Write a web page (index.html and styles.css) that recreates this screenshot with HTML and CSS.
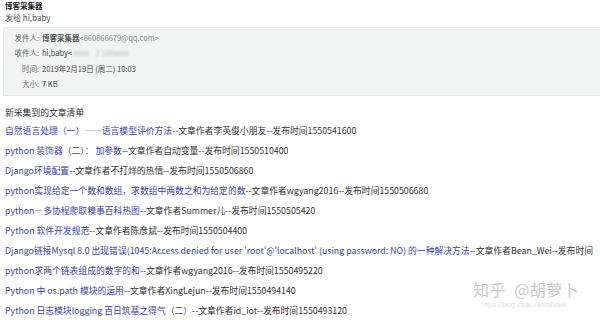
FILE: index.html
```html
<!DOCTYPE html>
<html lang="zh-CN">
<head>
<meta charset="utf-8">
<title>博客采集器</title>
<link rel="stylesheet" href="styles.css">
</head>
<body>
<div class="page">
  <div class="subject">博客采集器</div>
  <div class="to-line">发给 hi,baby</div>
  <div class="meta">
    <div class="row"><span class="label">发件人:</span><span class="value"><b class="sender">博客采集器</b><span class="addr">&lt;860866679@qq.com&gt;</span></span></div>
    <div class="row"><span class="label">收件人:</span><span class="value">hi,baby&lt; <span class="blurred">xxxx&nbsp;&nbsp;&nbsp;&nbsp;2 100xxxx</span></span></div>
    <div class="row"><span class="label">时间:</span><span class="value">2019年2月19日 (周二) 10:03</span></div>
    <div class="row"><span class="label">大小:</span><span class="value">7 KB</span></div>
  </div>
  <div class="content">
    <div class="heading">新采集到的文章清单</div>
    <div class="item"><a class="link">自然语言处理（一）——语言模型评价方法</a>--文章作者李英俊小朋友--发布时间1550541600</div>
    <div class="item"><a class="link">python 装饰器（二）： 加参数</a>--文章作者自动变量--发布时间1550510400</div>
    <div class="item"><a class="link">Django环境配置</a>--文章作者不打烊的热情--发布时间1550506860</div>
    <div class="item"><a class="link">python实现给定一个数和数组，求数组中两数之和为给定的数</a>--文章作者wgyang2016--发布时间1550506680</div>
    <div class="item"><a class="link">python—多协程爬取糗事百科热图</a>--文章作者Summer儿--发布时间1550505420</div>
    <div class="item"><a class="link">Python 软件开发规范</a>--文章作者陈彦斌--发布时间1550504400</div>
    <div class="item"><a class="link">Django链接Mysql 8.0 出现错误(1045:Access denied for user 'root'@'localhost' (using password: NO) 的一种解决方法</a>--文章作者Bean_Wei--发布时间</div>
    <div class="item"><a class="link">python求两个链表组成的数字的和</a>--文章作者wgyang2016--发布时间1550495220</div>
    <div class="item"><a class="link">Python 中 os.path 模块的运用</a>--文章作者XingLejun--发布时间1550494140</div>
    <div class="item"><a class="link">Python 日志模块logging 百日筑基之得气（二）</a>--文章作者id_iot--发布时间1550493120</div>
  </div>
</div>
<div class="watermark">
  <div class="wm-main">知乎&nbsp;&nbsp;@胡萝卜</div>
  <div class="wm-url">https://blog.csdn.net/hlhhell</div>
</div>
</body>
</html>
```
FILE: styles.css
```css
html, body {
  margin: 0;
  padding: 0;
  background: #ffffff;
  width: 600px;
  height: 320px;
  overflow: hidden;
  font-family: "Noto Sans CJK SC", "Noto Sans", sans-serif;
  color: #333333;
}

.page {
  position: relative;
  width: 600px;
  height: 320px;
  overflow: hidden;
}

.subject {
  padding-left: 5px;
  font-size: 7.5px;
  font-weight: bold;
  line-height: 12px;
  color: #222222;
}

.to-line {
  padding-left: 5px;
  font-size: 8px;
  line-height: 11px;
  color: #555555;
}

.meta {
  margin: 4px 0 0 3px;
  padding: 1.5px 0 3px 0;
  background: #f2f4f4;
  border-top: 1px solid #e8eaea;
  border-bottom: 1px solid #e3e5e5;
  border-left: 1px solid #e8eaea;
  font-size: 7.5px;
  color: #555555;
}

.row {
  display: flex;
  align-items: center;
  height: 15.5px;
  white-space: nowrap;
}

.label {
  width: 35px;
  text-align: right;
  color: #666666;
}

.value {
  padding-left: 3px;
  color: #444444;
}

.sender {
  font-weight: 600;
  color: #555555;
}

.addr {
  color: #888888;
}

.blurred {
  color: #b8b8b8;
  filter: blur(1.2px);
}

.content {
  padding-left: 5px;
  margin-top: 9.5px;
}

.heading {
  font-size: 8.8px;
  line-height: 16px;
  color: #333333;
}

.item {
  width: max-content;
  max-width: 595px;
  font-size: 8.8px;
  line-height: 20px;
  height: 20px;
  white-space: nowrap;
  overflow: hidden;
  color: #333333;
}

.link {
  color: #3a42aa;
  text-decoration: none;
}

.watermark {
  position: absolute;
  left: 473px;
  top: 280px;
  width: 130px;
}

.wm-main {
  font-size: 16px;
  line-height: 19px;
  color: #c9c9c9;
  letter-spacing: 0.5px;
  text-shadow: 0 0 1px #ffffff;
}

.wm-url {
  margin-top: 2px;
  padding-left: 8px;
  font-size: 7px;
  line-height: 8px;
  color: #e2e2e2;
  font-family: "Liberation Sans", sans-serif;
}
```
